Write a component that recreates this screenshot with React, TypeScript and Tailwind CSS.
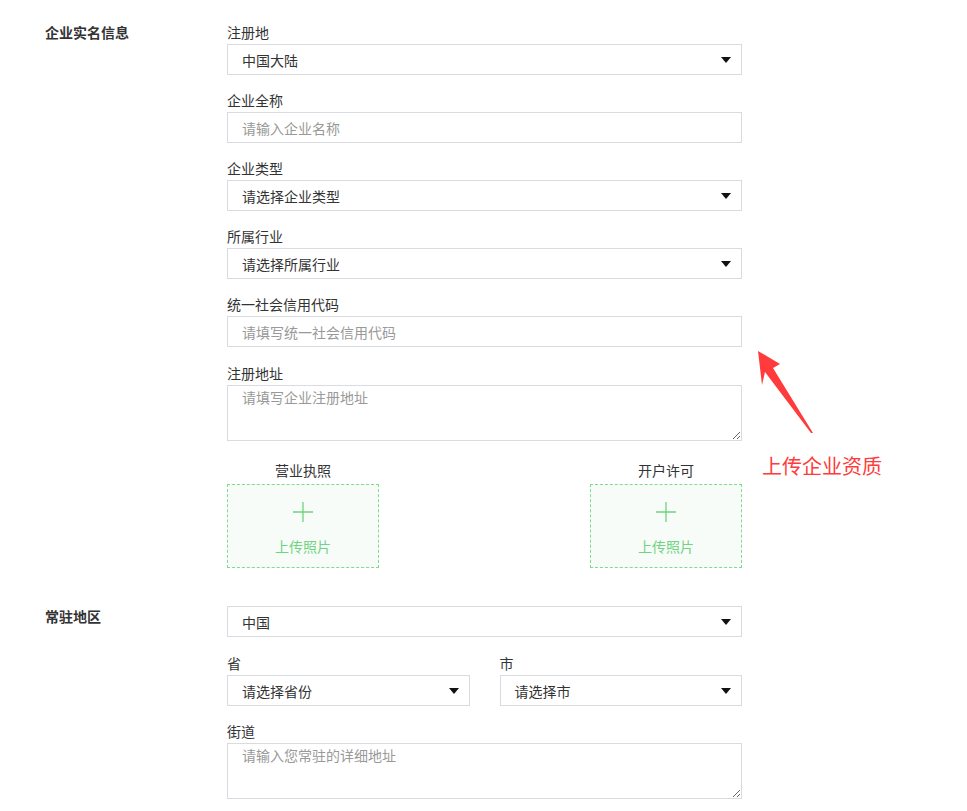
import React from "react";

const font = { fontFamily: '"Noto Sans CJK SC", "Noto Sans", sans-serif' };

const Caret = () => (
  <span className="ml-auto h-0 w-0 border-x-[5px] border-t-[6px] border-x-transparent border-t-[#111]" />
);

const Select = ({ value }: { value: string }) => (
  <div className="flex h-[31px] items-center border border-[#d9dbe2] bg-white pl-[14px] pr-[10px] text-sm text-[#333]">
    <span>{value}</span>
    <Caret />
  </div>
);

const Input = ({ placeholder }: { placeholder: string }) => (
  <input
    className="block h-[31px] w-full border border-[#d9dbe2] bg-white px-[14px] text-sm text-[#333] outline-none placeholder:text-[#999]"
    placeholder={placeholder}
    style={font}
  />
);

const Area = ({ placeholder }: { placeholder: string }) => (
  <textarea
    className="block h-[56px] w-full border border-[#d9dbe2] bg-white px-[14px] py-[1px] text-sm leading-5 text-[#333] outline-none placeholder:text-[#999]"
    placeholder={placeholder}
    style={font}
  />
);

const Field = ({ label, children, last }: { label: string; children: React.ReactNode; last?: boolean }) => (
  <div className={last ? "mb-[16px]" : "mb-[15px]"}>
    <div className="mb-[2px] text-sm leading-5 text-[#333]">{label}</div>
    {children}
  </div>
);

const Upload = ({ label }: { label: string }) => (
  <div className="flex w-[152px] flex-col items-center">
    <div className="mb-[4px] text-sm leading-5 text-[#333]">{label}</div>
    <div className="flex h-[84px] w-full flex-col items-center border border-dashed border-[#7fdc8f] bg-[#f7fcf8]">
      <svg className="mt-[16px]" width="22" height="22" viewBox="0 0 22 22">
        <path d="M11 1v20M1 11h20" stroke="#6fd381" strokeWidth="1.3" />
      </svg>
      <div className="mt-[13px] text-sm leading-5 text-[#6fd381]">上传照片</div>
    </div>
  </div>
);

export default function App() {
  return (
    <div className="relative min-h-[811px] w-[967px] bg-white" style={font}>
      <div className="pl-[45px] pt-[22px]">
        {/* 企业实名信息 */}
        <div className="flex">
          <div className="w-[182px] text-sm font-bold leading-5 text-[#333]">企业实名信息</div>
          <div className="w-[515px]">
            <Field label="注册地">
              <Select value="中国大陆" />
            </Field>
            <Field label="企业全称">
              <Input placeholder="请输入企业名称" />
            </Field>
            <Field label="企业类型">
              <Select value="请选择企业类型" />
            </Field>
            <Field label="所属行业">
              <Select value="请选择所属行业" />
            </Field>
            <Field label="统一社会信用代码" last>
              <Input placeholder="请填写统一社会信用代码" />
            </Field>
            <div className="mb-[19px]">
              <div className="mb-[2px] text-sm leading-5 text-[#333]">注册地址</div>
              <Area placeholder="请填写企业注册地址" />
            </div>
            <div className="flex justify-between">
              <Upload label="营业执照" />
              <Upload label="开户许可" />
            </div>
          </div>
        </div>

        {/* 常驻地区 */}
        <div className="mt-[38px] flex">
          <div className="w-[182px] text-sm font-bold leading-5 text-[#333]">常驻地区</div>
          <div className="w-[515px]">
            <div className="mb-[16px]">
              <Select value="中国" />
            </div>
            <div className="flex gap-[30px]">
              <div className="flex-1">
                <Field label="省">
                  <Select value="请选择省份" />
                </Field>
              </div>
              <div className="flex-1">
                <Field label="市">
                  <Select value="请选择市" />
                </Field>
              </div>
            </div>
            <div>
              <div className="mb-[2px] text-sm leading-5 text-[#333]">街道</div>
              <Area placeholder="请输入您常驻的详细地址" />
            </div>
          </div>
        </div>
      </div>

      {/* annotation */}
      <svg className="absolute left-[750px] top-[340px]" width="80" height="100" viewBox="750 340 80 100">
        <polygon points="758,351 780,364 773,368 813,433 811,433 765,372 762,385" fill="#ff3b3b" />
      </svg>
      <div className="absolute left-[762px] top-[452px] text-[20px] leading-7 text-[#ff3b3b]">上传企业资质</div>
    </div>
  );
}
